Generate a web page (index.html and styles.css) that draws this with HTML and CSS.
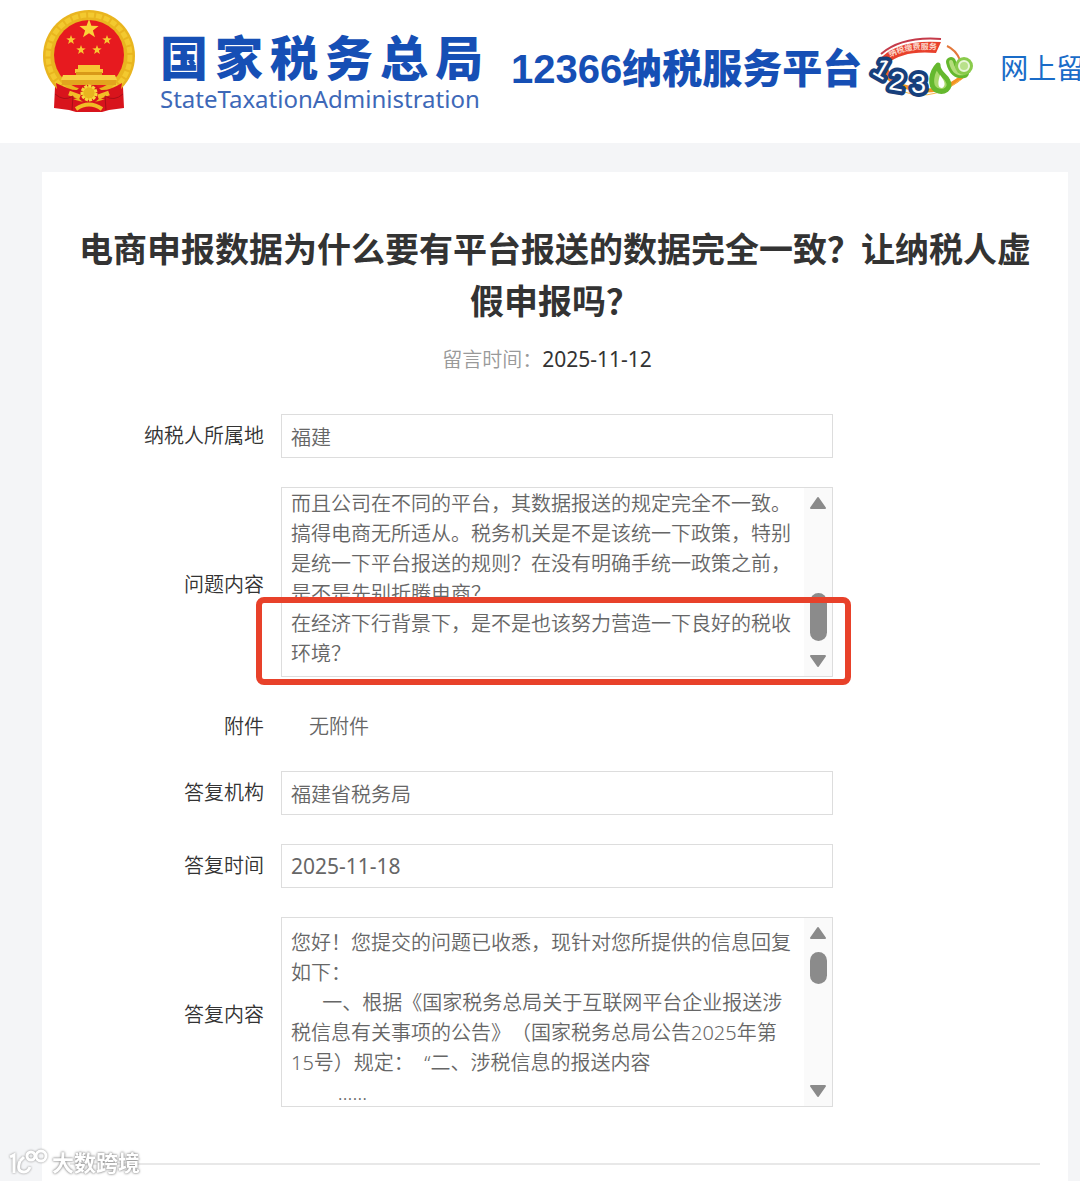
FILE: index.html
```html
<!DOCTYPE html>
<html lang="zh-CN">
<head>
    <meta charset="UTF-8">
    <meta name="viewport" content="width=device-width, initial-scale=1.0">
    <title>12366纳税服务平台</title>
    <link rel="stylesheet" href="styles.css">
</head>
<body>
    <header class="header">
        <svg class="emblem" viewBox="0 0 94 104" aria-hidden="true">
            <path d="M13 78 L12 99 L27 101 L34 103 L60 103 L67 101 L82 99 L81 78 Z" fill="#d8141c"/>
            <circle cx="47" cy="47" r="46" fill="#e9b51f"/>
            <circle cx="47" cy="47" r="41" fill="none" stroke="#f3c92f" stroke-width="5" stroke-dasharray="6 2"/>
            <circle cx="47" cy="46" r="35" fill="#e71a1f"/>
            <path d="M47 10 l2.4 6.8 7.2 .2 -5.7 4.4 2.1 6.9 -6 -4.1 -6 4.1 2.1 -6.9 -5.7 -4.4 7.2 -.2z" fill="#fbd338"/>
            <g fill="#f8c832">
                <path id="star" d="M29 26 l1.2 3.3 3.5 .1 -2.8 2.2 1 3.4 -2.9 -2 -2.9 2 1 -3.4 -2.8 -2.2 3.5 -.1z"/>
                <use href="#star" x="36"/>
                <use href="#star" x="10" y="10"/>
                <use href="#star" x="26" y="10"/>
            </g>
            <path d="M36 56 h22 v4 h3 v4 H33 v-4 h3z" fill="#f6c634"/>
            <path d="M34 63 h26 v3 H34z" fill="#d99a18"/>
            <path d="M21 66 h52 l2 5 H19z" fill="#f8d045"/>
            <path d="M20 71 h54 v5 H20z" fill="#e2a51e"/>
            <path d="M14 74 Q30 82 35 81 L40 76 h14 l5 5 Q67 82 80 74 L78 86 Q65 93 58 89 L53 93 H41 L36 89 Q26 93 16 86z" fill="#d8141c"/>
            <circle cx="47" cy="84" r="7" fill="#e9b51f" stroke="#f8d73c" stroke-width="3" stroke-dasharray="3 1"/>
            <path d="M27 84 L38 88 M67 84 L56 88" stroke="#f2bd27" stroke-width="5"/>
            <path d="M13 85 Q22 93 31 87 L30 101 M81 85 Q72 93 63 87 L64 101" fill="none" stroke="#a80f17" stroke-width="1"/>
            <path d="M34 100 Q47 91 60 100" fill="none" stroke="#f0bd25" stroke-width="4"/>
        </svg>
        <div class="brand">
            <div class="brand-cn"><span>国</span><span>家</span><span>税</span><span>务</span><span>总</span><span>局</span></div>
            <div class="brand-en">StateTaxationAdministration</div>
        </div>
        <div class="platform">12366纳税服务平台</div>
        <svg class="hotline" viewBox="0 0 106 62" role="img" aria-label="12366">
            <defs>
                <path id="arc" d="M22 20 Q42 10 72 13"/>
            </defs>
            <path d="M18 31 Q16 44 38 50 Q72 61 97 37" fill="none" stroke="#f39222" stroke-width="4"/>
            <path d="M25 50 Q60 69 92 43" fill="none" stroke="#f6b64c" stroke-width="1"/>
            <path d="M13 17 Q34 -1 73 2" fill="none" stroke="#c53b4a" stroke-width="2"/>
            <path d="M9 25 Q27 2 73 5 L68 16 Q35 13 19 27 L19 39 Z" fill="#e8402c"/>
            <path d="M12 27 Q10 37 24 43 L19 28z" fill="#f0642b"/>
            <text class="hotline-slogan"><textPath href="#arc">纳税缴费服务</textPath></text>
            <path d="M79 9 Q88 13 92 23" fill="none" stroke="#e3793c" stroke-width="2"/>
            <text class="hotline-digit" transform="translate(3 36) rotate(30)">1</text>
            <text class="hotline-digit" transform="translate(20 52) rotate(10)">2</text>
            <text class="hotline-digit" transform="translate(43 56)">3</text>
            <path d="M70 28 C63 35 61 49 68 53 C76 57 84 51 80 44 C78 38 70 37 70 28z" fill="#a9d96b" stroke="#65b82e" stroke-width="5" stroke-linejoin="round"/>
            <path d="M72 38 Q68 51 74 51 Q80 48 72 38z" fill="#fff"/>
            <path d="M83 25 Q86 38 96 36" fill="none" stroke="#65b82e" stroke-width="10" stroke-linecap="round"/>
            <path d="M83 25 Q86 38 96 36" fill="none" stroke="#b5dd7c" stroke-width="4" stroke-linecap="round"/>
            <circle cx="96" cy="29" r="9" fill="#8acb4c"/>
            <circle cx="96" cy="29" r="5" fill="#b9e18b" stroke="#e9f6d9" stroke-width="2"/>
        </svg>
        <nav class="nav"><a class="nav-link" href="#">网上留言</a></nav>
    </header>

    <main class="card">
        <h1 class="title">电商申报数据为什么要有平台报送的数据完全一致？让纳税人虚假申报吗？</h1>
        <p class="meta">留言时间：<time class="date" datetime="2025-11-12">2025-11-12</time></p>

        <form class="form">
            <label class="label" for="area">纳税人所属地</label>
            <input class="input" id="area" type="text" value="福建" readonly>

            <label class="label label-low" for="question">问题内容</label>
            <div class="field">
                <textarea class="textarea textarea-scrolled" id="question" readonly>而且公司在不同的平台，其数据报送的规定完全不一致。搞得电商无所适从。税务机关是不是该统一下政策，特别是统一下平台报送的规则？在没有明确手统一政策之前，是不是先别折腾电商？
在经济下行背景下，是不是也该努力营造一下良好的税收环境？</textarea>
                <div class="scrollbar" aria-hidden="true">
                    <svg class="arrow" viewBox="0 0 18 14"><path d="M9 2 L16 12 H2z"/></svg>
                    <div class="thumb thumb-low"></div>
                    <svg class="arrow" viewBox="0 0 18 14"><path d="M9 12 L16 2 H2z"/></svg>
                </div>
                <div class="mark"></div>
            </div>

            <span class="label label-low">附件</span>
            <span class="attachment">无附件</span>

            <label class="label" for="office">答复机构</label>
            <input class="input" id="office" type="text" value="福建省税务局" readonly>

            <label class="label" for="reply-date">答复时间</label>
            <input class="input input-date" id="reply-date" type="text" value="2025-11-18" readonly>

            <label class="label label-low" for="reply">答复内容</label>
            <div class="field">
                <textarea class="textarea" id="reply" readonly>您好！您提交的问题已收悉，现针对您所提供的信息回复如下：
      一、根据《国家税务总局关于互联网平台企业报送涉税信息有关事项的公告》（国家税务总局公告2025年第15号）规定：  “二、涉税信息的报送内容
         ……</textarea>
                <div class="scrollbar" aria-hidden="true">
                    <svg class="arrow" viewBox="0 0 18 14"><path d="M9 2 L16 12 H2z"/></svg>
                    <div class="thumb thumb-high"></div>
                    <svg class="arrow" viewBox="0 0 18 14"><path d="M9 12 L16 2 H2z"/></svg>
                </div>
            </div>
        </form>
        <hr class="line">
    </main>

    <div class="watermark">
        <svg class="watermark-icon" viewBox="0 0 40 28" aria-hidden="true">
            <path d="M2 9 L6 7 V25 M12 13 Q8 24 16 24 Q20 24 22 19 M12 13 l4 -4"/>
            <circle cx="23" cy="8" r="4"/>
            <circle cx="33" cy="8" r="5"/>
        </svg>
        <span>大数跨境</span>
    </div>
</body>
</html>
```
FILE: styles.css
```css
*{
    box-sizing: border-box;
}
body{
    margin: 0;
    min-height: 100vh;
    display: flex;
    flex-direction: column;
    overflow-x: hidden;
    background-color: #f4f5f7;
    font-family: "Noto Sans", "Noto Sans CJK SC", sans-serif;
    font-size: 20px;
    line-height: 30px;
    color: #333;
    text-spacing-trim: space-all;
}
.header{
    display: flex;
    align-items: flex-start;
    height: 143px;
    padding: 9px 0 0 42px;
    background-color: #fff;
    overflow: hidden;
}
.header > *{
    flex-shrink: 0;
}
.emblem{
    width: 94px;
    height: 104px;
}
.brand{
    margin: 22px 0 0 24px;
    color: #164fb5;
}
.brand-cn{
    display: flex;
    gap: 7px;
    font-size: 48px;
    font-weight: 900;
    line-height: 54px;
}
.brand-en{
    font-size: 24px;
    line-height: 28px;
    color: #3d68b8;
}
.platform{
    margin: 30px 0 0 28px;
    font-family: "Liberation Sans", "Noto Sans CJK SC", sans-serif;
    font-size: 40px;
    font-weight: 900;
    line-height: 60px;
    color: #164fb5;
}
.hotline{
    width: 106px;
    height: 62px;
    margin: 28px 0 0 6px;
}
.hotline-slogan{
    font-size: 8px;
    font-weight: bold;
    fill: #fbd5c8;
}
.hotline-digit{
    font-family: "Liberation Sans", sans-serif;
    font-size: 27px;
    fill: #fff;
    stroke: #173f7c;
    stroke-width: 8px;
    stroke-linejoin: round;
    paint-order: stroke;
}
.nav{
    margin: 39px 0 0 26px;
}
.nav-link{
    font-size: 28px;
    line-height: 40px;
    color: #1a6cc8;
    text-decoration: none;
    white-space: nowrap;
}
.card{
    flex: 1;
    margin: 29px 12px 0 42px;
    padding-top: 51px;
    background-color: #fff;
}
.title{
    margin: 0;
    padding: 0 30px;
    font-size: 34px;
    font-weight: bold;
    line-height: 52px;
    text-align: center;
}
.meta{
    margin: 17px 16px 39px 0;
    text-align: center;
    font-weight: 350;
    color: #999;
}
.date{
    font-size: 21px;
    font-weight: 400;
    color: #333;
}
.form{
    display: grid;
    grid-template-columns: 222px minmax(0, 552px);
    gap: 29px 17px;
    align-items: center;
}
.label{
    text-align: right;
    font-weight: 350;
}
.label-low{
    padding-top: 6px;
}
.input, .textarea{
    display: block;
    width: 100%;
    margin: 0;
    border: 1px solid #ddd;
    border-radius: 0;
    background-color: #fff;
    font-family: inherit;
    font-size: 20px;
    font-weight: 350;
    line-height: 30px;
    color: #666;
    text-spacing-trim: space-all;
    outline: none;
}
.input{
    height: 44px;
    padding: 0 9px;
}
.input-date{
    font-size: 21px;
    font-weight: 400;
}
.field{
    position: relative;
}
.textarea{
    height: 190px;
    padding: 10px 38px 0 9px;
    resize: none;
    overflow: hidden;
}
.textarea-scrolled{
    padding-top: 1px;
}
.attachment{
    padding: 6px 28px 0;
    font-weight: 350;
    color: #666;
}
.scrollbar{
    position: absolute;
    top: 1px;
    right: 1px;
    bottom: 1px;
    width: 28px;
    display: flex;
    flex-direction: column;
    align-items: center;
    padding: 8px 0;
    background-color: #fafafa;
}
.arrow{
    width: 18px;
    height: 14px;
    fill: #8b8b8b;
    stroke: #8b8b8b;
    stroke-width: 2px;
    stroke-linejoin: round;
}
.arrow:last-child{
    margin-top: auto;
}
.thumb{
    width: 17px;
    border-radius: 9px;
    background-color: #8b8b8b;
}
.thumb-low{
    height: 48px;
    margin-top: 83px;
}
.thumb-high{
    height: 32px;
    margin-top: 12px;
}
/* red frame around the last paragraph */
.mark{
    position: absolute;
    top: 110px;
    left: -25px;
    right: -18px;
    height: 88px;
    border: 6px solid #e8412a;
    border-radius: 8px;
}
.line{
    margin: 56px 28px 0;
    border: 0;
    border-top: 2px solid #e8e8e8;
}
.watermark{
    position: fixed;
    left: 8px;
    bottom: 4px;
    display: flex;
    align-items: center;
    gap: 4px;
    font-size: 22px;
    font-weight: bold;
    color: #fff;
    text-shadow: 0 0 2px #888, 0 0 3px #999;
}
.watermark-icon{
    width: 40px;
    height: 28px;
    fill: none;
    stroke: #fff;
    stroke-width: 3px;
    filter: drop-shadow(0 0 1px #888);
}
```
